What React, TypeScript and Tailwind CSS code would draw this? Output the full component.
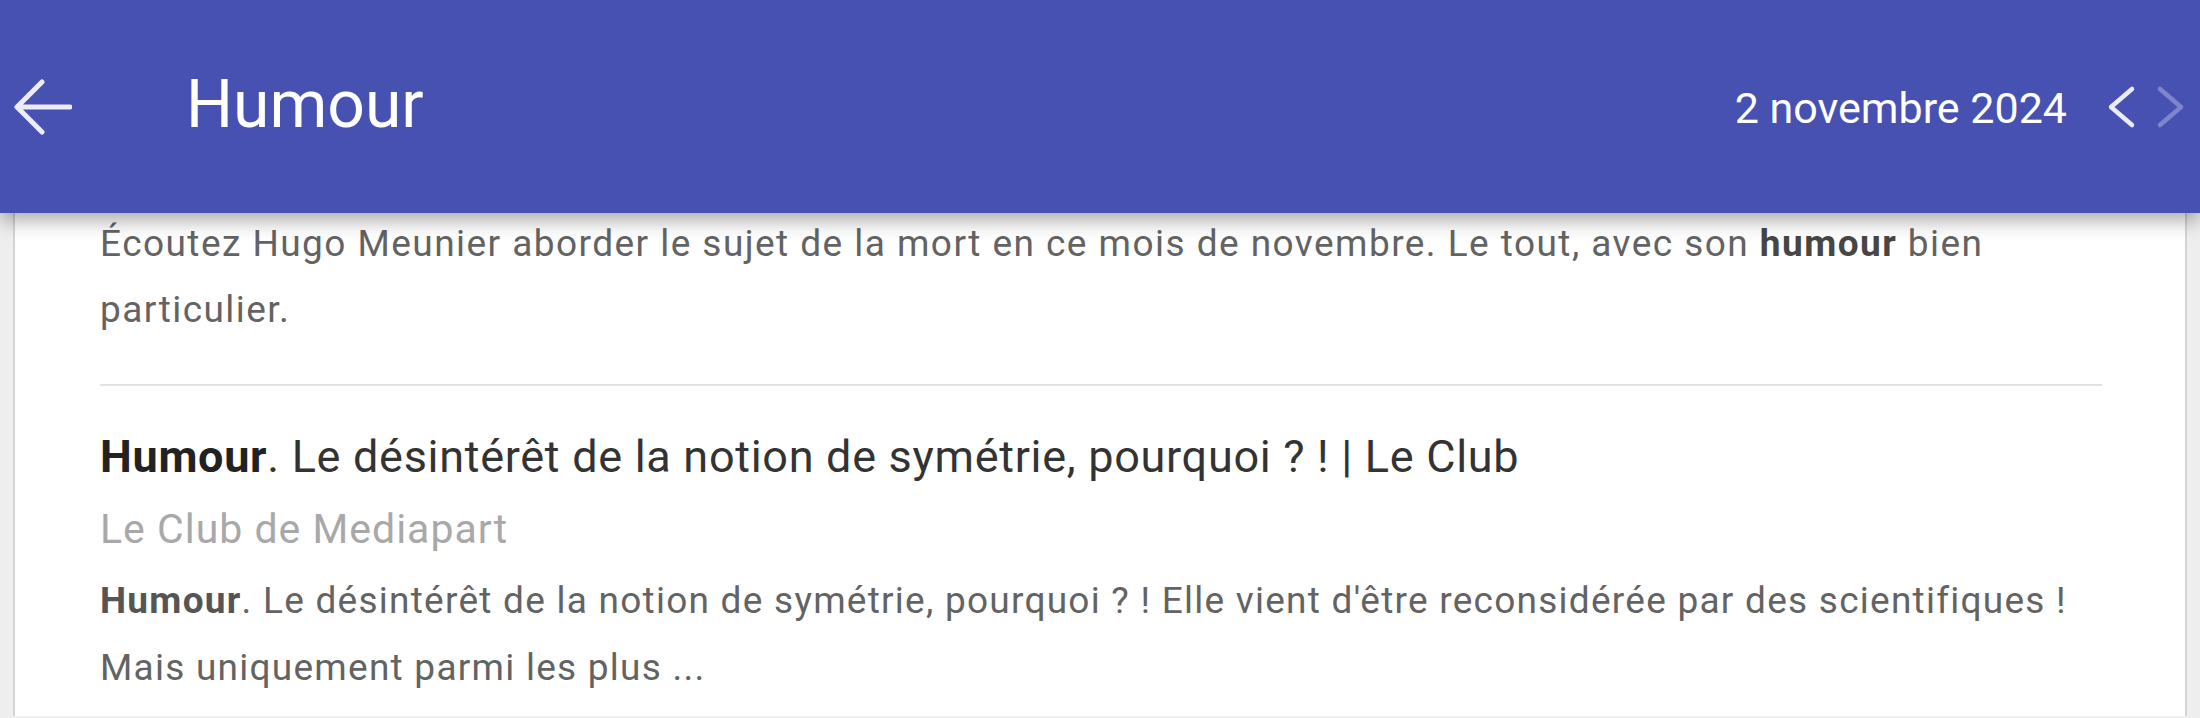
import React from 'react';

const ink = "font-['Roboto','Liberation_Sans',sans-serif]";

function BackArrow() {
  return (
    <svg width="58" height="56" viewBox="0 0 58 56" className="shrink-0 ml-[14px]">
      <path d="M56 28H4M28 3L3 28l25 25" fill="none" stroke="#ececf6" strokeWidth="5" strokeLinecap="round" strokeLinejoin="round" />
    </svg>
  );
}

function DayChevrons() {
  return (
    <svg width="80" height="44" viewBox="0 0 80 44" className="shrink-0 ml-[38px] mr-[15px]">
      <path d="M27 4L6 22l21 18" fill="none" stroke="#ececf6" strokeWidth="4.5" strokeLinecap="round" strokeLinejoin="round" />
      <path d="M55 4l21 18-21 18" fill="none" stroke="#ffffff" strokeOpacity="0.3" strokeWidth="4.5" strokeLinecap="round" strokeLinejoin="round" />
    </svg>
  );
}

export default function App() {
  return (
    <div className={`w-[2200px] h-[718px] overflow-hidden flex flex-col bg-[#eeeeee] ${ink}`}>
      <header className="relative z-10 h-[213px] shrink-0 flex items-center bg-[#4751b2] shadow-[0_8px_18px_rgba(0,0,0,0.32)]">
        <BackArrow />
        <h1 className="ml-[114px] mb-[4px] text-[66px] leading-none font-normal text-white">Humour</h1>
        <div className="flex-1" />
        <span className="mt-[4px] text-[43px] leading-none text-white">2 novembre 2024</span>
        <DayChevrons />
      </header>

      <main className="flex-1 min-h-0 px-[13px]">
        <div className="h-full bg-white border-x-2 border-[#d4d4d4] pl-[85px] pr-[83px]">
          <p className="-mt-[2px] text-[37px] leading-[66px] tracking-[1.45px] text-[#636363]">
            Écoutez Hugo Meunier aborder le sujet de la mort en ce mois de novembre. Le tout, avec son{' '}
            <b className="font-bold text-[#464646]">humour</b> bien particulier.
          </p>

          <div className="mt-[41px] border-t-2 border-[#e2e2e2]" />

          <article className="pt-[41px]">
            <h2 className="text-[45px] leading-[60px] tracking-[0.7px] text-[#333333]">
              <b className="font-bold text-[#222222]">Humour</b>. Le désintérêt de la notion de symétrie, pourquoi ? ! | Le Club
            </h2>
            <div className="mt-[14px] text-[41px] leading-[56px] tracking-[1px] text-[#a8a8a8]">Le Club de Mediapart</div>
            <p className="mt-[10px] text-[37px] leading-[67px] tracking-[1.25px] text-[#636363]">
              <b className="font-bold text-[#555555]">Humour</b>. Le désintérêt de la notion de symétrie, pourquoi ? ! Elle vient d'être reconsidérée par des scientifiques ! Mais uniquement parmi les plus ...
            </p>
          </article>
        </div>
      </main>
    </div>
  );
}
